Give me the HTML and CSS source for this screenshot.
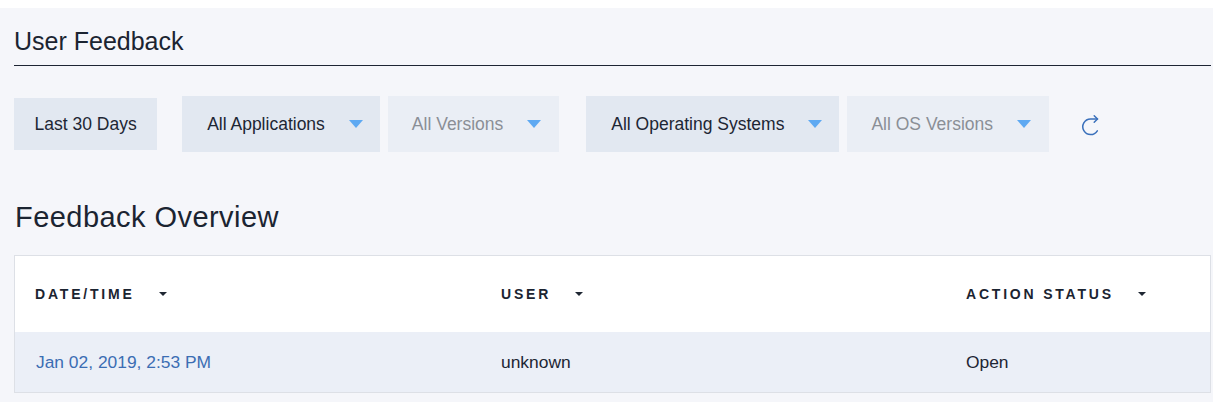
FILE: index.html
```html
<!DOCTYPE html>
<html lang="en">
<head>
<meta charset="utf-8">
<title>User Feedback</title>
<link rel="stylesheet" href="styles.css">
</head>
<body>
<main class="page">
  <h1 class="page-title">User Feedback</h1>

  <div class="filters">
    <button class="chip chip-date">Last 30 Days</button>
    <div class="select-group">
      <button class="select">All Applications<span class="caret"></span></button>
      <button class="select is-disabled">All Versions<span class="caret"></span></button>
    </div>
    <div class="select-group">
      <button class="select">All Operating Systems<span class="caret"></span></button>
      <button class="select is-disabled">All OS Versions<span class="caret"></span></button>
    </div>
    <button class="refresh" aria-label="Refresh">
      <svg width="20" height="22" viewBox="0 0 20 22" fill="none" stroke="#3a70bb" stroke-width="1.5" stroke-linecap="round" stroke-linejoin="round">
        <path d="M16.5 5 H9.5 A7.8 7.8 0 1 0 16.3 16.8"/>
        <path d="M13.2 1.7 L16.5 5 L13.2 8.3"/>
      </svg>
    </button>
  </div>

  <h2 class="section-title">Feedback Overview</h2>

  <div class="table">
    <div class="table-head">
      <div class="th">DATE/TIME<span class="sort"></span></div>
      <div class="th">USER<span class="sort"></span></div>
      <div class="th">ACTION STATUS<span class="sort"></span></div>
    </div>
    <div class="table-row">
      <div class="td td-link">Jan 02, 2019, 2:53 PM</div>
      <div class="td">unknown</div>
      <div class="td">Open</div>
    </div>
  </div>
</main>
</body>
</html>
```

FILE: styles.css
```css
html, body {
  margin: 0;
  padding: 0;
  background: #ffffff;
  overflow: hidden;
}

body {
  padding-top: 8px;
  font-family: "Liberation Sans", Arial, sans-serif;
  color: #1d2634;
}

.page {
  box-sizing: border-box;
  background: #f5f6fa;
  padding: 18px 2px 0 14px;
  height: 394px;
}

.page-title {
  margin: 0;
  font-size: 25px;
  font-weight: 400;
  line-height: 30px;
  padding: 0 0 9px 0;
  border-bottom: 1px solid #1d2533;
  color: #1b2431;
}

.filters {
  display: flex;
  align-items: center;
  height: 56px;
  margin-top: 30px;
}

button {
  font-family: inherit;
  border: 0;
  margin: 0;
  cursor: pointer;
}

.chip {
  height: 52px;
  padding: 0 20.5px;
  background: #e2e8f1;
  font-size: 17.5px;
  color: #1d2634;
}

.select-group {
  display: flex;
  gap: 8px;
  margin-left: 25px;
}

.select-group + .select-group {
  margin-left: 27px;
}

.select {
  display: flex;
  align-items: center;
  gap: 24px;
  height: 56px;
  padding: 0 17px 0 25px;
  background: #e2e8f1;
  font-size: 17.5px;
  color: #1d2634;
}

.select.is-disabled {
  background: #eaeef5;
  color: #8a8e96;
  padding: 0 18px 0 24px;
}

.caret {
  width: 0;
  height: 0;
  border-left: 7.5px solid transparent;
  border-right: 7.5px solid transparent;
  border-top: 8px solid #5ea9f2;
}

.refresh {
  background: transparent;
  padding: 0;
  margin-left: 32px;
  display: flex;
  margin-top: 2px;
}

.section-title {
  margin: 48px 0 0 1px;
  font-size: 29px;
  font-weight: 400;
  line-height: 34px;
  letter-spacing: 0.45px;
  color: #1b2431;
}

.table {
  margin-top: 21px;
  border: 1px solid #dde0e6;
  background: #ffffff;
}

.table-head,
.table-row {
  display: grid;
  grid-template-columns: 466px 465px 1fr;
}

.table-head {
  height: 76px;
  align-items: center;
  background: #ffffff;
}

.table-row {
  height: 60px;
  align-items: center;
  background: #ebeff7;
}

.th {
  display: flex;
  align-items: center;
  padding-left: 20px;
  font-size: 14px;
  font-weight: 700;
  letter-spacing: 2.8px;
  color: #1b2431;
}

.sort {
  width: 0;
  height: 0;
  margin-left: 24px;
  border-left: 4px solid transparent;
  border-right: 4px solid transparent;
  border-top: 4px solid #1f2733;
}

.td {
  padding-left: 20px;
  font-size: 17.4px;
  color: #1d2634;
}

.td-link {
  padding-left: 21px;
  color: #3b6db3;
}
```
